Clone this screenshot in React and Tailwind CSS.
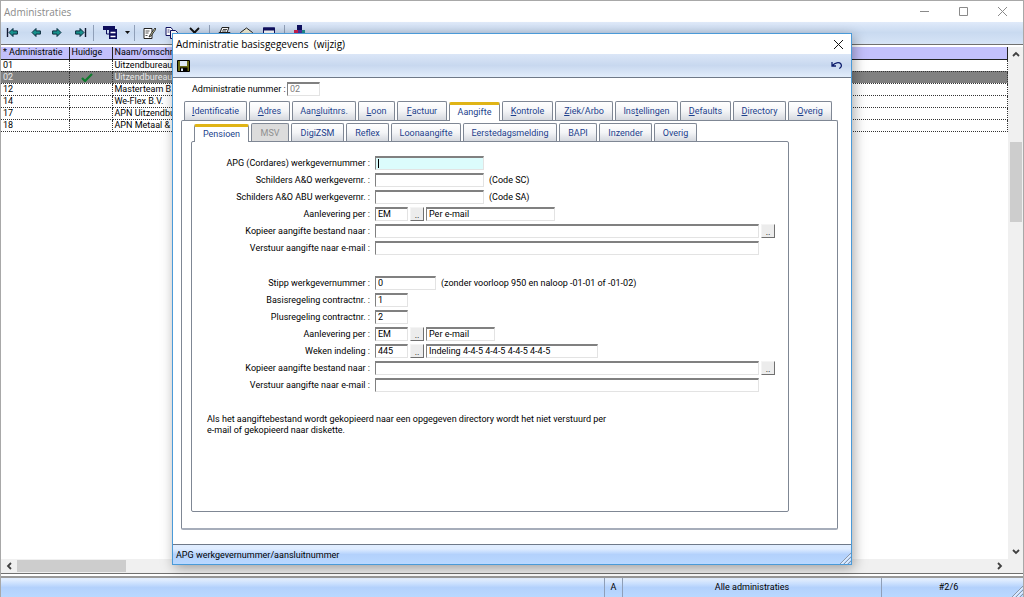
import { useState } from 'react'
import clsx from 'clsx'

const ROWS = [
  { id: '01', name: 'Uitzendbureau' },
  { id: '02', name: 'Uitzendbureau', current: true },
  { id: '12', name: 'Masterteam B.V.' },
  { id: '14', name: 'We-Flex B.V.' },
  { id: '17', name: 'APN Uitzendbureau' },
  { id: '18', name: 'APN Metaal & Techniek' },
]

// [before, mnemonic, after, width]
const MAIN_TABS = [
  ['', 'I', 'dentificatie', 'w-[63px]'],
  ['', 'A', 'dres', 'w-[41px]'],
  ['Aan', 's', 'luitnrs.', 'w-16'],
  ['', 'L', 'oon', 'w-[37px]'],
  ['', 'F', 'actuur', 'w-[50px]'],
  ['Aangifte', '', '', 'w-[51px]'],
  ['', 'K', 'ontrole', 'w-[51px]'],
  ['', 'Z', 'iek/Arbo', 'w-[58px]'],
  ['Ins', 't', 'ellingen', 'w-[63px]'],
  ['', 'D', 'efaults', 'w-[51px]'],
  ['', 'D', 'irectory', 'w-[53px]'],
  ['', 'O', 'verig', 'w-[44px]'],
]

const SUB_TABS = [
  ['Pensioen', '', '', 'w-[55px]'],
  ['MSV', '', '', 'w-[38px]'],
  ['DigiZSM', '', '', 'w-[53px]'],
  ['Reflex', '', '', 'w-[43px]'],
  ['Loonaangifte', '', '', 'w-[70px]'],
  ['Eerstedagsmelding', '', '', 'w-[94px]'],
  ['BAPI', '', '', 'w-[38px]'],
  ['Inzender', '', '', 'w-[53px]'],
  ['Overig', '', '', 'w-[43px]'],
]

function ToolButton({ label, className, children }) {
  return (
    <button type="button" aria-label={label} className={clsx('flex h-5 shrink-0 items-center justify-center', className)}>
      {children}
    </button>
  )
}

function Separator() {
  return <div className="h-4 w-px shrink-0 bg-[#8f9fb8]" />
}

function Arrow({ flip, bar }) {
  return (
    <svg width="13" height="11" viewBox="0 0 13 11" className={flip ? '-scale-x-100' : undefined}>
      {bar && <path d="M1.500 1v9" stroke="#101830" strokeWidth="1.400" />}
      <path d="M3 5.500 7 1.500v2.400h4.400v3.200H7v2.400z" fill="#17908c" stroke="#0b2a3c" strokeWidth="1" />
    </svg>
  )
}

function MainToolbar() {
  return (
    <div className="flex h-[22px] shrink-0 items-center border-b border-[#d8e4f4] bg-linear-to-b from-[#e0eafa] via-[#c9daf0] to-[#d5e3f6]">
      <ToolButton label="Eerste" className="w-[23px]"><Arrow bar /></ToolButton>
      <ToolButton label="Vorige" className="w-[22px]"><Arrow /></ToolButton>
      <ToolButton label="Volgende" className="w-[22px]"><Arrow flip /></ToolButton>
      <ToolButton label="Laatste" className="w-[25px]"><Arrow flip bar /></ToolButton>
      <Separator />
      <ToolButton label="Beeld" className="w-[31px]">
        <svg width="14" height="13" viewBox="0 0 14 13">
          <rect x="0" y="0" width="12" height="4" fill="#0d0d5c" />
          <path d="M3.500 4v4h3" stroke="#0d0d5c" fill="none" />
          <rect x="6" y="3" width="8" height="10" fill="#0d0d5c" />
          <path d="M7.500 6.500h5M7.500 10.500h5" stroke="#fff" strokeWidth="1.500" />
        </svg>
      </ToolButton>
      <ToolButton label="Meer" className="w-[9px]">
        <svg width="5" height="3" viewBox="0 0 5 3" className="mr-1"><path d="M0 0h5L2.500 3z" fill="#111" /></svg>
      </ToolButton>
      <Separator />
      <ToolButton label="Wijzigen" className="w-7">
        <svg width="13" height="12" viewBox="0 0 13 12">
          <path d="M1 1.500h8v10H1z" fill="#fff" stroke="#222" />
          <path d="M2.500 4h4M2.500 6h3M2.500 8.500h2" stroke="#555" />
          <path d="m12 1-5 7-1 2 2-1 5-7z" fill="#d8d8a8" stroke="#222" strokeWidth=".9" />
        </svg>
      </ToolButton>
      <ToolButton label="Kopieren" className="w-4">
        <svg width="13" height="12" viewBox="0 0 13 12">
          <path d="M1 .5h5l1.500 2v6H1z" fill="#fff" stroke="#101060" />
          <path d="M5.500 3.500h5l2 2v6h-7z" fill="#fff" stroke="#101060" />
          <path d="M2.500 3h2M2.500 5h2M7 6.500h3M7 8.500h4" stroke="#101060" strokeWidth=".8" />
        </svg>
      </ToolButton>
      <ToolButton label="Verwijderen" className="w-[30px]">
        <svg width="11" height="11" viewBox="0 0 11 11"><path d="m1 1 9 9M10 1l-9 9" stroke="#111" strokeWidth="1.800" /></svg>
      </ToolButton>
      <Separator />
      <ToolButton label="Afdrukken" className="w-7">
        <svg width="13" height="12" viewBox="0 0 13 12">
          <path d="M4 .5h7l-2 5H2z" fill="#fff" stroke="#222" />
          <path d="M5 2.500h4M4 4h4" stroke="#222" strokeWidth=".8" />
          <path d="M1 5.500h11v4H1z" fill="#ddd" stroke="#222" />
        </svg>
      </ToolButton>
      <ToolButton label="Verzenden" className="w-4">
        <svg width="13" height="12" viewBox="0 0 13 12">
          <path d="M.5 5.500 6.500 1l6 4.500v5H.5z" fill="#f4f0d8" stroke="#222" />
        </svg>
      </ToolButton>
      <ToolButton label="Venster" className="w-[30px]">
        <svg width="12" height="12" viewBox="0 0 12 12">
          <path d="M.5 1h11v10H.5z" fill="#fff" stroke="#101060" />
          <path d="M0 2h12" stroke="#101060" strokeWidth="3" />
        </svg>
      </ToolButton>
      <Separator />
      <ToolButton label="Afsluiten" className="w-7">
        <svg width="13" height="16" viewBox="0 0 13 16">
          <path d="M4 0h5v5H4z" fill="#101060" />
          <path d="M1 5h4v4H1z" fill="#d02050" />
          <path d="M5 5h5v9H5z" fill="#5030a0" />
          <path d="M9 5h3v3H9z" fill="#209090" />
        </svg>
      </ToolButton>
    </div>
  )
}

function Tabs({ items, active, onSelect, disabled, size }) {
  return (
    <div role="tablist" className="relative z-10 flex items-end gap-[2px]">
      {items.map(([before, key, after, width], i) => (
        <button
          key={before + key + after}
          type="button"
          role="tab"
          aria-selected={i === active}
          disabled={i === disabled}
          onClick={() => onSelect(i)}
          className={clsx(
            'shrink-0 whitespace-nowrap rounded-t-[2px] border border-b-0 border-[#7f8794] text-center',
            width,
            size,
            i === active && '-mb-px border-t-[3px] border-t-[#e0b416] bg-white pb-[2px] text-[#1c3f8c]',
            i === disabled && 'bg-[#dcdcdc] text-[#909090]',
            i !== active && i !== disabled && 'bg-linear-to-b from-white via-[#f4f5f7] to-[#d6d9df] text-[#1c3f8c]',
          )}
        >
          {before}
          {key && <span className="underline">{key}</span>}
          {after}
        </button>
      ))}
    </div>
  )
}

function Field({ id, value = '', width, readOnly, label, className }) {
  return (
    <input
      id={id}
      aria-label={label}
      defaultValue={value}
      readOnly={readOnly}
      className={clsx(
        'h-[14px] shrink-0 border border-t-2 border-[#e3e3e3] border-l-[#808080] border-t-[#808080] pl-[2px] outline-none',
        width,
        className || 'bg-white',
      )}
    />
  )
}

function Browse({ label }) {
  return (
    <button
      type="button"
      aria-label={label}
      className="flex h-[14px] w-[14px] shrink-0 items-end justify-center border border-[#f4f4f4] border-r-[#707070] border-b-[#707070] bg-[#ececec] leading-[10px]"
    >
      ..
    </button>
  )
}

function Row({ id, label, children }) {
  return (
    <div className="flex h-[17px] items-center">
      <label htmlFor={id} className="w-[178px] shrink-0 pr-[5px] text-right whitespace-nowrap">{label} :</label>
      <div className="flex items-center gap-[2px]">{children}</div>
    </div>
  )
}

function PensionForm() {
  return (
    <form className="pt-3 pl-[5px]">
      <Row id="apg" label="APG (Cordares) werkgevernummer">
        <div className="relative flex">
          <Field id="apg" width="w-[109px]" className="bg-[#dcfcfc]" />
          <span className="absolute top-[3px] left-[3px] h-[9px] w-px bg-black" />
        </div>
      </Row>
      <Row id="schilders" label="Schilders A&O werkgevernr.">
        <Field id="schilders" width="w-[109px]" />
        <span className="pl-[3px]">(Code SC)</span>
      </Row>
      <Row id="abu" label="Schilders A&O ABU werkgevernr.">
        <Field id="abu" width="w-[109px]" />
        <span className="pl-[3px]">(Code SA)</span>
      </Row>
      <Row id="per1" label="Aanlevering per">
        <Field id="per1" width="w-[33px]" value="EM" />
        <Browse label="Kies aanlevering" />
        <Field width="w-[129px]" value="Per e-mail" label="Omschrijving aanlevering" readOnly />
      </Row>
      <Row id="copy1" label="Kopieer aangifte bestand naar">
        <Field id="copy1" width="w-[384px]" />
        <Browse label="Kies map" />
      </Row>
      <Row id="mail1" label="Verstuur aangifte naar e-mail">
        <Field id="mail1" width="w-[384px]" />
      </Row>

      <div className="h-[18px]" />

      <Row id="stipp" label="Stipp werkgevernummer">
        <Field id="stipp" width="w-[61px]" value="0" />
        <span className="pl-[3px] whitespace-nowrap">(zonder voorloop 950 en naloop -01-01 of -01-02)</span>
      </Row>
      <Row id="basis" label="Basisregeling contractnr.">
        <Field id="basis" width="w-[33px]" value="1" />
      </Row>
      <Row id="plus" label="Plusregeling contractnr.">
        <Field id="plus" width="w-[33px]" value="2" />
      </Row>
      <Row id="per2" label="Aanlevering per">
        <Field id="per2" width="w-[33px]" value="EM" />
        <Browse label="Kies aanlevering" />
        <Field width="w-[69px]" value="Per e-mail" label="Omschrijving aanlevering" readOnly />
      </Row>
      <Row id="weeks" label="Weken indeling">
        <Field id="weeks" width="w-[33px]" value="445" />
        <Browse label="Kies indeling" />
        <Field width="w-[172px]" value="Indeling 4-4-5 4-4-5 4-4-5 4-4-5" label="Omschrijving indeling" readOnly />
      </Row>
      <Row id="copy2" label="Kopieer aangifte bestand naar">
        <Field id="copy2" width="w-[384px]" />
        <Browse label="Kies map" />
      </Row>
      <Row id="mail2" label="Verstuur aangifte naar e-mail">
        <Field id="mail2" width="w-[384px]" />
      </Row>

      <p className="mt-[21px] ml-[10px] leading-[11px] whitespace-nowrap">
        Als het aangiftebestand wordt gekopieerd naar een opgegeven directory wordt het niet verstuurd per
        <br />
        e-mail of gekopieerd naar diskette.
      </p>
    </form>
  )
}

function Grip({ className }) {
  return (
    <svg width="11" height="11" viewBox="0 0 11 11" className={className}>
      <path d="M0 11 11 0M4 11l7-7M8 11l3-3" stroke="#8c97a8" />
      <path d="M1.500 11 11 1.500M5.500 11 11 5.500" stroke="#fff" />
    </svg>
  )
}

function Dialog() {
  const [tab, setTab] = useState(5)
  const [sub, setSub] = useState(0)

  return (
    <section
      role="dialog"
      aria-label="Administratie basisgegevens (wijzig)"
      className="absolute inset-x-[171px] top-8 bottom-8 flex flex-col border border-[#4a9ad8] bg-white shadow-[2px_3px_12px_rgba(0,0,0,0.35)]"
    >
      <header className="flex h-5 shrink-0 items-center justify-between pr-2 pl-[3px]">
        <h2 className="font-['Open_Sans',sans-serif] text-[10px] whitespace-pre text-black">Administratie basisgegevens  (wijzig)</h2>
        <button type="button" aria-label="Sluiten">
          <svg width="9" height="9" viewBox="0 0 9 9"><path d="m0 0 9 9M9 0 0 9" stroke="#111" /></svg>
        </button>
      </header>

      <div className="flex h-6 shrink-0 items-center justify-between border-b border-[#6f7988] bg-linear-to-b from-[#dbe6f7] via-[#c8d8ef] to-[#e2edfb] pr-2 pl-1">
        <button type="button" aria-label="Opslaan">
          <svg width="13" height="12" viewBox="0 0 13 12">
            <path d="M.5.5h12v11H.5z" fill="#6b6b14" stroke="#000" />
            <path d="M3 1h7v5H3z" fill="#dfe9f4" />
            <path d="M3 7.500h7.500V12H3z" fill="#000" />
            <path d="M4 8.500h2V11H4z" fill="#dfe9f4" />
          </svg>
        </button>
        <button type="button" aria-label="Ongedaan maken">
          <svg width="12" height="9" viewBox="0 0 12 9">
            <path d="M1 1v4h4M1.500 4.500C4 1.500 8 .8 9.800 2.800c1.200 1.500.6 3.800-1.600 4.700" fill="none" stroke="#0c1c6c" strokeWidth="1.300" />
          </svg>
        </button>
      </div>

      <div className="flex grow flex-col pt-[2px] pr-[13px] pb-[14px] pl-2">
        <div className="flex h-[17px] shrink-0 items-center pl-[11px]">
          <label htmlFor="number" className="w-[95px] whitespace-nowrap">Administratie nummer :</label>
          <Field id="number" width="w-[33px]" value="02" readOnly className="bg-white text-[#808080]" />
        </div>

        <div className="mt-1 pl-[3px]">
          <Tabs items={MAIN_TABS} active={tab} onSelect={setTab} size="h-[19px]" />
        </div>
        <div className="flex grow flex-col rounded-[2px] border border-[#7f8794] border-b-2 border-b-[#a6adba] pt-[2px] pr-12 pb-4 pl-[9px]">
          <div className="pl-[3px]">
            <Tabs items={SUB_TABS} active={sub} onSelect={setSub} disabled={1} size="h-[18px]" />
          </div>
          <div className="grow rounded-[2px] border border-[#7f8794]">
            <PensionForm />
          </div>
        </div>
      </div>

      <footer className="relative flex h-5 shrink-0 items-center border-t border-[#6f7988] bg-linear-to-b from-[#e0edff] from-20% via-[#b3d1fc] via-50% to-[#b9d8ff] pl-[3px]">
        APG werkgevernummer/aansluitnummer
        <Grip className="absolute right-0 bottom-0" />
      </footer>
    </section>
  )
}

function Chevron({ className }) {
  return (
    <svg width="8" height="6" viewBox="0 0 8 6" className={className}>
      <path d="m1 5 3-3 3 3" fill="none" stroke="#404040" strokeWidth="1.800" />
    </svg>
  )
}

function AdminTable() {
  return (
    <table className="w-full table-fixed border-collapse text-left leading-[11px]">
      <thead>
        <tr className="h-3 bg-[#c3c0fc]">
          <th className="w-[68px] border-r border-b border-[#222] p-0 pl-[2px] font-normal whitespace-nowrap">* Administratie</th>
          <th className="w-[43px] border-r border-b border-[#222] p-0 pl-[2px] font-normal">Huidige</th>
          <th className="border-r border-b border-[#222] p-0 pl-[2px] font-normal">Naam/omschrijving</th>
        </tr>
      </thead>
      <tbody>
        {ROWS.map((row) => (
          <tr key={row.id} className={clsx('h-3', row.current && 'bg-[#808080] text-[#e8e8e8]')}>
            <td className="border-r border-b border-dotted border-[#333] p-0 pl-[2px]">{row.id}</td>
            <td className="border-r border-b border-dotted border-[#333] p-0">
              {row.current && (
                <svg width="12" height="9" viewBox="0 0 12 9" className="ml-[11px]">
                  <path d="m1 5 3 3 7-7" fill="none" stroke="#0d7a2c" strokeWidth="2.200" />
                </svg>
              )}
            </td>
            <td className="border-r border-b border-dotted border-[#333] p-0 pl-[2px]">{row.name}</td>
          </tr>
        ))}
      </tbody>
    </table>
  )
}

export default function App() {
  return (
    <div className="relative flex h-screen flex-col overflow-hidden border border-b-0 border-[#a8a8a8] bg-white font-['Roboto',sans-serif] text-[9px] leading-3 text-black">
      <header className="flex h-[21px] shrink-0 items-center justify-between pr-4 pl-[3px] text-[#8a8a8a]">
        <h1 className="font-['Open_Sans',sans-serif] text-[10px]">Administraties</h1>
        <div className="flex items-center gap-[30px]">
          <button type="button" aria-label="Minimaliseren">
            <svg width="9" height="9" viewBox="0 0 9 9"><path d="M0 4.500h9" stroke="#8a8a8a" /></svg>
          </button>
          <button type="button" aria-label="Maximaliseren">
            <svg width="9" height="9" viewBox="0 0 9 9"><path d="M.5.5h8v8h-8z" fill="none" stroke="#8a8a8a" /></svg>
          </button>
          <button type="button" aria-label="Afsluiten">
            <svg width="9" height="9" viewBox="0 0 9 9"><path d="m0 0 9 9M9 0 0 9" stroke="#8a8a8a" /></svg>
          </button>
        </div>
      </header>
      <MainToolbar />

      <main className="flex min-h-0 grow border-y border-[#707070] pt-[2px]">
        <div className="flex min-w-0 grow flex-col">
          <div className="min-h-0 grow overflow-hidden"><AdminTable /></div>
          <div className="flex h-[14px] shrink-0 items-center bg-[#f0f0f0]">
            <Chevron className="mx-1 w-2 -rotate-90" />
            <div className="h-3 w-[109px] bg-[#cdcdcd]" />
            <Chevron className="mr-1 ml-auto rotate-90" />
          </div>
        </div>
        <div className="flex w-[15px] shrink-0 flex-col items-center bg-[#f0f0f0] pt-1 pb-[18px]">
          <Chevron />
          <div className="mt-[85px] h-20 w-3 bg-[#cdcdcd]" />
          <Chevron className="mt-auto rotate-180" />
        </div>
      </main>

      <footer className="relative mt-[2px] flex h-[21px] shrink-0 items-center border-t-2 border-[#9a9a9a] bg-linear-to-b from-[#e0edff] from-10% via-[#b3d1fc] via-50% to-[#b9d8ff] text-center">
        <div className="h-full grow border-r border-[#8f9fb8]" />
        <div className="flex h-full w-[18px] items-center justify-center border-r border-[#8f9fb8] pb-[2px]">A</div>
        <div className="flex h-full w-[259px] items-center justify-center border-r border-[#8f9fb8] pb-[2px]">Alle administraties</div>
        <div className="flex h-full w-[141px] items-center justify-center pr-2 pb-[2px]">#2/6</div>
        <Grip className="absolute right-0 bottom-0" />
      </footer>

      <Dialog />
    </div>
  )
}
